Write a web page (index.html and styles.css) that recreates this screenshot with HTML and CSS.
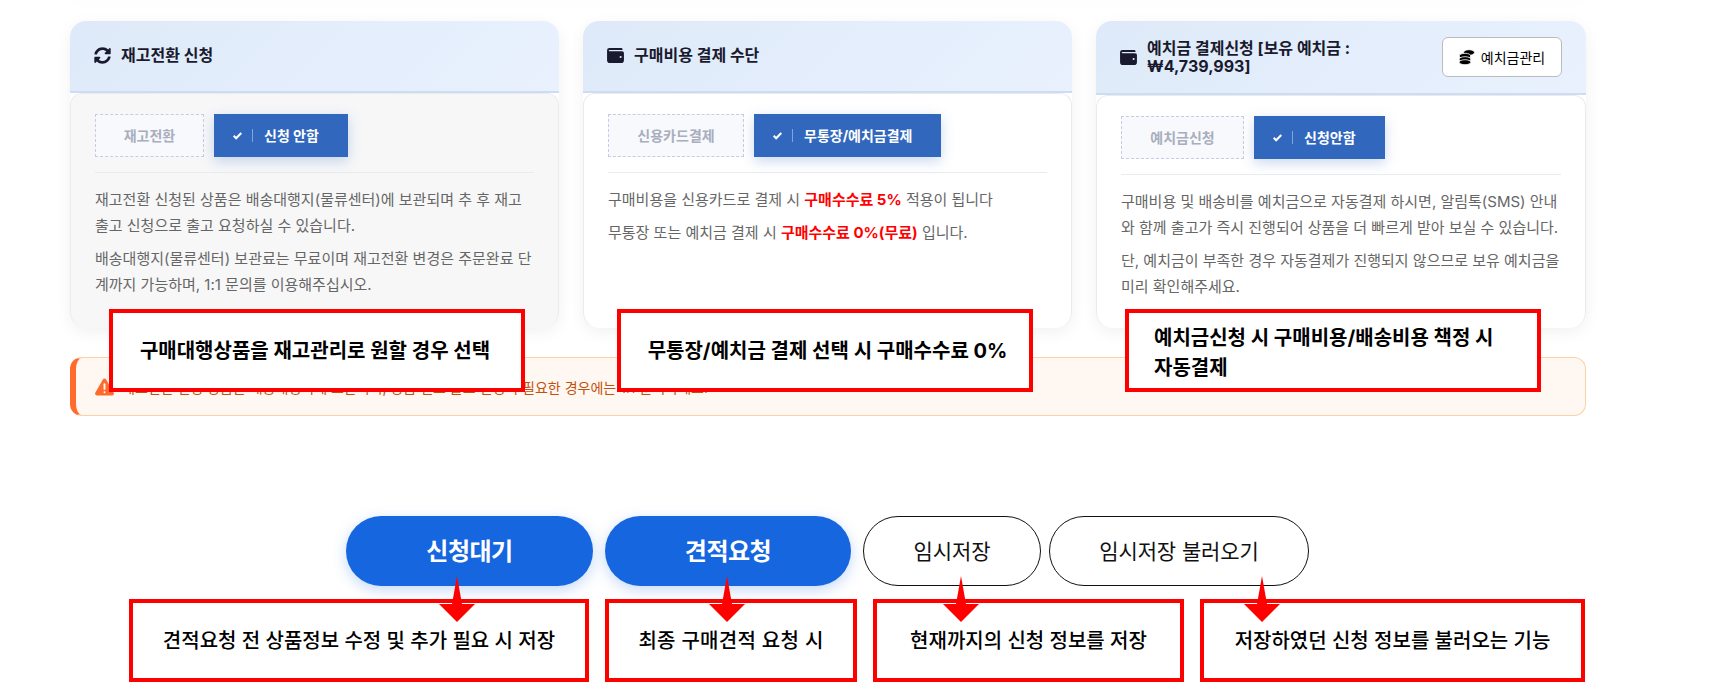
FILE: index.html
```html
<!doctype html>
<html lang="ko">
<head>
  <title>구매대행 신청</title>
  <meta charset="utf-8">
  <link rel="stylesheet" href="styles.css">
</head>
<body>

<div class="topshade"></div>

<div class="wrap">

  <div class="cards">

    <div class="card">
      <div class="card-head">
        <svg class="head-icon sync" viewBox="0 0 512 512"><path d="M370.700 133.300C339.500 104 298.900 88 255.800 88c-77.500.1-144.300 53.200-162.800 126.900-1.300 5.400-6.100 9.200-11.700 9.200H24.100c-7.500 0-13.200-6.800-11.800-14.200C34 94.800 135.400 8 256 8c66.100 0 126.100 26 170.400 68.300L462.100 40.600C477.200 25.500 503 36.200 503 57.600V192c0 13.300-10.700 24-24 24H344.600c-21.400 0-32.100-25.900-17-41l43.100-41.700zM33 296h134.400c21.400 0 32.100 25.900 17 41l-41.900 41.900C173.700 408.100 214.200 424 257.200 424c77.400-.1 144.300-53.100 162.800-126.900 1.300-5.400 6.100-9.200 11.700-9.200h57.300c7.500 0 13.200 6.800 11.800 14.200C478 417.200 376.600 504 256 504c-66.100 0-126.100-26-170.400-68.300L49.900 471.400C34.800 486.500 9 475.800 9 454.400V320c0-13.300 10.700-24 24-24z"/></svg>
        <h3>재고전환 신청</h3>
      </div>
      <div class="card-body gray">
        <div class="options">
          <span class="opt">재고전환</span>
          <span class="opt-on"><svg class="check" viewBox="0 0 16 16"><path d="M2.500 8.500l3.500 3.500 7.500-7.500" /></svg><i></i>신청 안함</span>
        </div>
        <p>재고전환 신청된 상품은 배송대행지(물류센터)에 보관되며 추 후 재고 출고 신청으로 출고 요청하실 수 있습니다.</p>
        <p>배송대행지(물류센터) 보관료는 무료이며 재고전환 변경은 주문완료 단계까지 가능하며, 1:1 문의를 이용해주십시오.</p>
      </div>
    </div>

    <div class="card">
      <div class="card-head">
        <svg class="head-icon" viewBox="0 0 18 16"><path d="M2.500 0H15a1.500 1.500 0 0 1 1.500 1.500V2H2.500a.700.700 0 0 0 0 1.400H16A2 2 0 0 1 18 5.400V13a3 3 0 0 1-3 3H3a3 3 0 0 1-3-3V2.500A2.500 2.500 0 0 1 2.500 0zM14.500 8.500a1.100 1.100 0 1 0 0 2.200 1.100 1.100 0 0 0 0-2.200z"/></svg>
        <h3>구매비용 결제 수단</h3>
      </div>
      <div class="card-body">
        <div class="options">
          <span class="opt wide">신용카드결제</span>
          <span class="opt-on"><svg class="check" viewBox="0 0 16 16"><path d="M2.500 8.500l3.500 3.500 7.500-7.500" /></svg><i></i>무통장/예치금결제</span>
        </div>
        <p>구매비용을 신용카드로 결제 시 <b>구매수수료 5%</b> 적용이 됩니다</p>
        <p>무통장 또는 예치금 결제 시 <b>구매수수료 0%(무료)</b> 입니다.</p>
      </div>
    </div>

    <div class="card">
      <div class="card-head tall">
        <svg class="head-icon" viewBox="0 0 18 16"><path d="M2.500 0H15a1.500 1.500 0 0 1 1.500 1.500V2H2.500a.700.700 0 0 0 0 1.400H16A2 2 0 0 1 18 5.400V13a3 3 0 0 1-3 3H3a3 3 0 0 1-3-3V2.500A2.500 2.500 0 0 1 2.500 0zM14.500 8.500a1.100 1.100 0 1 0 0 2.200 1.100 1.100 0 0 0 0-2.200z"/></svg>
        <h3>예치금 결제신청 [보유 예치금 : ₩4,739,993]</h3>
        <span class="manage">
          <svg class="coins" viewBox="0 0 16 16"><ellipse cx="10" cy="3.500" rx="5.500" ry="2.800"/><ellipse cx="6" cy="7" rx="5.800" ry="2.700"/><ellipse cx="6" cy="10.200" rx="5.800" ry="2.500"/><ellipse cx="6" cy="13.200" rx="5.800" ry="2.500"/></svg>
          예치금관리
        </span>
      </div>
      <div class="card-body">
        <div class="options">
          <span class="opt mid">예치금신청</span>
          <span class="opt-on"><svg class="check" viewBox="0 0 16 16"><path d="M2.500 8.500l3.500 3.500 7.500-7.500" /></svg><i></i>신청안함</span>
        </div>
        <p>구매비용 및 배송비를 예치금으로 자동결제 하시면, 알림톡(SMS) 안내와 함께 출고가 즉시 진행되어 상품을 더 빠르게 받아 보실 수 있습니다.</p>
        <p>단, 예치금이 부족한 경우 자동결제가 진행되지 않으므로 보유 예치금을 미리 확인해주세요.</p>
      </div>
    </div>

  </div>

  <div class="alert">
    <svg class="warn" viewBox="0 0 20 18"><path d="M10 0c.700 0 1.300.400 1.700 1l8 14c.700 1.300-.200 3-1.700 3H2c-1.500 0-2.400-1.700-1.700-3l8-14C8.700.400 9.300 0 10 0z"/><rect class="warn-mark" x="9" y="5" width="2" height="7" rx="1"/><rect class="warn-mark" x="9" y="13.500" width="2" height="2" rx="1"/></svg>
    <span>재고전환 신청 상품은 배송대행지에 보관되며, 상품 별도 출고 신청이 필요한 경우에는 1:1 문의하세요.</span>
  </div>

  <div class="actions">
    <span class="btn primary first">신청대기</span>
    <span class="btn primary">견적요청</span>
    <span class="btn plain">임시저장</span>
    <span class="btn plain load">임시저장 불러오기</span>
  </div>

</div>

<!-- 설명 박스 -->
<div class="note big n1">구매대행상품을 재고관리로 원할 경우 선택</div>
<div class="note big n2">무통장/예치금 결제 선택 시 구매수수료 0%</div>
<div class="note big n3">예치금신청 시 구매비용/배송비용 책정 시 자동결제</div>
<div class="note n4">견적요청 전 상품정보 수정 및 추가 필요 시 저장</div>
<div class="note n5">최종 구매견적 요청 시</div>
<div class="note n6">현재까지의 신청 정보를 저장</div>
<div class="note n7">저장하였던 신청 정보를 불러오는 기능</div>

<svg class="arrow a1" viewBox="0 0 36 46"><path d="M18 0l5 28h13L18 46 0 28h13z"/></svg>
<svg class="arrow a2" viewBox="0 0 36 46"><path d="M18 0l5 28h13L18 46 0 28h13z"/></svg>
<svg class="arrow a3" viewBox="0 0 36 46"><path d="M18 0l5 28h13L18 46 0 28h13z"/></svg>
<svg class="arrow a4" viewBox="0 0 36 46"><path d="M18 0l5 28h13L18 46 0 28h13z"/></svg>

</body>
</html>
```

FILE: styles.css
```css
html, body {
  margin: 0;
  padding: 0;
  height: 700px;
  overflow: hidden;
}

body {
  position: relative;
  background: #fff;
  color: #1a1a2e;
  font-family: Inter, "Noto Sans CJK KR", sans-serif;
  font-size: 14px;
}

.topshade {
  height: 1px;
  margin: -1px 134px 0 70px;
  box-shadow: 0 2px 12px rgba(0, 0, 0, 0.08);
}

.wrap {
  width: 1516px;
  margin-left: 70px;
  padding-top: 21px;
}

.cards {
  display: flex;
  gap: 24px;
}

.card {
  width: 489px;
  height: 307px;
  display: flex;
  flex-direction: column;
  border-radius: 16px;
  box-shadow: 0 4px 16px rgba(0, 0, 0, 0.06);
  background: #fff;
}

.card:last-child {
  width: 490px;
}

.card-head {
  height: 68px;
  flex: none;
  display: flex;
  align-items: center;
  gap: 10px;
  padding: 0 24px 2px;
  border-radius: 16px 16px 0 0;
  border-bottom: 2px solid #cddcf3;
  background: linear-gradient(135deg, #deeaf9, #e9f1fe);
}

.card-head.tall {
  height: 72px;
  padding-bottom: 0;
}

.card-head h3 {
  margin: 0;
  font-size: 16px;
  line-height: 18px;
  font-weight: 700;
}

.card-head.tall h3 {
  width: 240px;
}

.head-icon {
  width: 17px;
  height: 15px;
  flex: none;
  fill: #1a1a2e;
}

.head-icon.sync {
  height: 17px;
}

.manage {
  margin-left: auto;
  width: 120px;
  height: 40px;
  box-sizing: border-box;
  display: flex;
  align-items: center;
  justify-content: center;
  gap: 6px;
  background: #fff;
  border: 1px solid #bbb;
  border-radius: 6px;
  color: #000;
  font-size: 14px;
}

.coins {
  width: 16px;
  height: 16px;
  fill: #000;
  stroke: #fff;
  stroke-width: 0.8;
}

.card-body {
  flex: 1;
  padding: 20px 24px 0;
  border: 1px solid #e9ecef;
  border-bottom: 0;
  border-radius: 12px 12px 16px 16px;
  color: #666;
  font-size: 15px;
  line-height: 26px;
  background: #fff;
}

.card-body.gray {
  background: #f7f7f8;
}

.options {
  display: flex;
  gap: 10px;
  padding-bottom: 15px;
  margin-bottom: 14px;
  border-bottom: 1px solid #e9ecef;
}

.opt {
  width: 109px;
  height: 43px;
  box-sizing: border-box;
  display: flex;
  align-items: center;
  justify-content: center;
  border: 1px dashed #c3cee6;
  background: #f8f9fd;
  color: #a9aebd;
  font-size: 14px;
  font-weight: 700;
}

.opt.wide {
  width: 136px;
}

.opt.mid {
  width: 123px;
}

.opt-on {
  height: 43px;
  display: flex;
  align-items: center;
  padding: 0 29px 0 18px;
  background: #3167bd;
  color: #fff;
  font-size: 14px;
  font-weight: 700;
  box-shadow: 0 4px 12px rgba(49, 103, 189, 0.25);
}

.opt-on i {
  width: 1px;
  height: 13px;
  margin: 0 11px 0 9px;
  background: rgba(255, 255, 255, 0.4);
}

.check {
  width: 11px;
  height: 11px;
  fill: none;
  stroke: #fff;
  stroke-width: 3;
}

.card-body p {
  margin: 0 0 7px;
}

.card-body b {
  color: #f00;
}

.alert {
  height: 59px;
  box-sizing: border-box;
  margin-top: 29px;
  display: flex;
  align-items: center;
  gap: 8px;
  padding-left: 19px;
  border: 1px solid #fdd0a5;
  border-left: 6px solid #ff6b2c;
  border-radius: 12px;
  background: #fff7f2;
  color: #c2510c;
  font-size: 14px;
}

.warn {
  width: 19px;
  height: 18px;
  flex: none;
  fill: #ff6b2c;
}

.warn .warn-mark {
  fill: #fff;
}

.actions {
  display: flex;
  gap: 12px;
  margin-top: 100px;
  padding-left: 276px;
}

.btn {
  height: 70px;
  box-sizing: border-box;
  display: flex;
  align-items: center;
  justify-content: center;
  padding-bottom: 3px;
  border-radius: 35px;
}

.btn.primary {
  width: 246px;
  background: #1666e0;
  color: #fff;
  font-size: 24px;
  font-weight: 700;
  letter-spacing: -0.5px;
  box-shadow: 0 4px 14px rgba(22, 102, 224, 0.25);
}

.btn.first {
  width: 247px;
}

.btn.plain {
  width: 178px;
  background: #fff;
  color: #111;
  border: 1px solid #111;
  font-size: 21px;
  letter-spacing: -0.1px;
}

.btn.load {
  width: 260px;
  margin-left: -4px;
}

/* annotations over the page */
.note {
  position: absolute;
  top: 599px;
  height: 83px;
  box-sizing: border-box;
  display: flex;
  align-items: center;
  justify-content: center;
  padding-top: 1px;
  border: 4px solid #f00;
  background: #fff;
  color: #000;
  font-size: 20px;
  line-height: 30px;
  font-weight: 500;
}

.note.big {
  top: 309px;
  width: 416px;
  font-weight: 700;
}

.n1 { left: 109px; padding-right: 4px; }
.n2 { left: 617px; padding-left: 5px; }
.n3 { left: 1125px; justify-content: flex-start; padding: 4px 24px 0 25px; }
.n4 { left: 129px; width: 460px; }
.n5 { left: 605px; width: 252px; letter-spacing: 0.3px; }
.n6 { left: 873px; width: 311px; }
.n7 { left: 1200px; width: 385px; }

.arrow {
  position: absolute;
  top: 576px;
  width: 36px;
  height: 46px;
  fill: #f00;
}

.a1 { left: 439px; }
.a2 { left: 709px; }
.a3 { left: 943px; }
.a4 { left: 1244px; }
```
